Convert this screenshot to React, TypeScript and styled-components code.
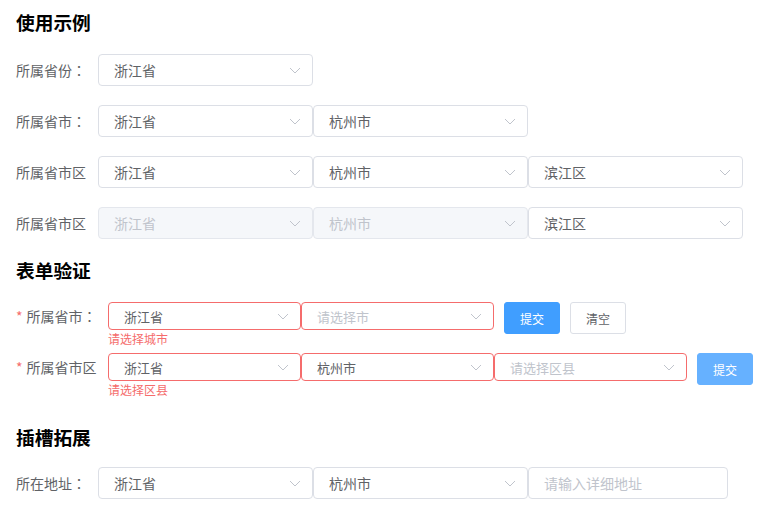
import styled, { createGlobalStyle, css } from "styled-components";

const GlobalStyle = createGlobalStyle`
  body {
    margin: 0;
    background: #ffffff;
    font-family: "Noto Sans CJK SC", "Noto Sans", sans-serif;
    color: #606266;
  }
`;

const Page = styled.div`
  padding: 10px 16px 0;
`;

const Title = styled.h3<{ $top?: number; $bottom?: number }>`
  margin: ${(p) => p.$top || 0}px 0 ${(p) => p.$bottom ?? 20}px;
  font-size: 18.72px;
  line-height: 24px;
  font-weight: 700;
  color: #000000;
`;

const Row = styled.div<{ $small?: boolean }>`
  display: flex;
  align-items: ${(p) => (p.$small ? "flex-start" : "center")};
  height: 32px;
  margin-bottom: 19px;
`;

const Label = styled.label<{ $width: number; $small?: boolean }>`
  flex: none;
  width: ${(p) => p.$width}px;
  font-size: 14px;
  line-height: ${(p) => (p.$small ? "28px" : "32px")};
  white-space: nowrap;
  color: #606266;
`;

const Colon = styled.span`
  font-family: "Noto Sans CJK TC", "Noto Sans CJK SC", sans-serif;
`;

const Star = styled.span`
  color: #f56c6c;
  margin-right: 4px;
`;

const Group = styled.div`
  position: relative;
  display: flex;
`;

const ErrorTip = styled.div`
  position: absolute;
  left: 0;
  top: 100%;
  padding-top: 3px;
  font-size: 12px;
  line-height: 12px;
  color: #f56c6c;
  white-space: nowrap;
`;

const Box = styled.div<{
  $width: number;
  $small?: boolean;
  $error?: boolean;
  $disabled?: boolean;
}>`
  position: relative;
  box-sizing: border-box;
  width: ${(p) => p.$width}px;
  height: ${(p) => (p.$small ? 28 : 32)}px;
  padding: 0 30px 0 15px;
  display: flex;
  align-items: center;
  border: 1px solid #dcdfe6;
  border-radius: 4px;
  background: #ffffff;
  font-size: ${(p) => (p.$small ? 13 : 14)}px;
  color: #606266;
  ${(p) =>
    p.$error &&
    css`
      border-color: #f56c6c;
    `}
  ${(p) =>
    p.$disabled &&
    css`
      background: #f5f7fa;
      border-color: #e4e7ed;
      color: #c0c4cc;
    `}
`;

const Placeholder = styled.span`
  color: #c0c4cc;
`;

const Arrow = styled.svg`
  position: absolute;
  right: 11px;
  top: 50%;
  margin-top: -3px;
  width: 12px;
  height: 7px;
`;

const Button = styled.button<{ $kind?: "primary" | "plain"; $faded?: boolean }>`
  box-sizing: border-box;
  height: 32px;
  padding: 0 15px;
  margin-left: 10px;
  border-radius: 3px;
  font-family: inherit;
  font-size: 12px;
  border: 1px solid ${(p) => (p.$kind === "primary" ? "#409eff" : "#dcdfe6")};
  background: ${(p) => (p.$kind === "primary" ? "#409eff" : "#ffffff")};
  color: ${(p) => (p.$kind === "primary" ? "#ffffff" : "#606266")};
  ${(p) =>
    p.$faded &&
    css`
      background: #66b1ff;
      border-color: #66b1ff;
    `}
`;

const Chevron = () => (
  <Arrow viewBox="0 0 12 7">
    <path d="M1 1 L6 6 L11 1" fill="none" stroke="#c0c4cc" strokeWidth="1" />
  </Arrow>
);

type SelectProps = {
  value?: string;
  placeholder?: string;
  width?: number;
  small?: boolean;
  error?: boolean;
  disabled?: boolean;
  arrow?: boolean;
};

const Select = ({
  value,
  placeholder,
  width = 215,
  small,
  error,
  disabled,
  arrow = true,
}: SelectProps) => (
  <Box $width={width} $small={small} $error={error} $disabled={disabled}>
    {value ? value : <Placeholder>{placeholder}</Placeholder>}
    {arrow && <Chevron />}
  </Box>
);

export default function App() {
  return (
    <Page>
      <GlobalStyle />
      <Title>使用示例</Title>
      <Row>
        <Label $width={82}>
          所属省份<Colon>：</Colon>
        </Label>
        <Select value="浙江省" />
      </Row>
      <Row>
        <Label $width={82}>
          所属省市<Colon>：</Colon>
        </Label>
        <Select value="浙江省" />
        <Select value="杭州市" />
      </Row>
      <Row>
        <Label $width={82}>所属省市区</Label>
        <Select value="浙江省" />
        <Select value="杭州市" />
        <Select value="滨江区" />
      </Row>
      <Row>
        <Label $width={82}>所属省市区</Label>
        <Select value="浙江省" disabled />
        <Select value="杭州市" disabled />
        <Select value="滨江区" />
      </Row>

      <Title $top={19}>表单验证</Title>
      <Row $small>
        <Label $width={92} $small>
          <Star>*</Star>所属省市<Colon>：</Colon>
        </Label>
        <Group>
          <Select value="浙江省" width={193} small error />
          <Select placeholder="请选择市" width={193} small error />
          <ErrorTip>请选择城市</ErrorTip>
        </Group>
        <Button $kind="primary">提交</Button>
        <Button $kind="plain">清空</Button>
      </Row>
      <Row $small>
        <Label $width={92} $small>
          <Star>*</Star>所属省市区
        </Label>
        <Group>
          <Select value="浙江省" width={193} small error />
          <Select value="杭州市" width={193} small error />
          <Select placeholder="请选择区县" width={193} small error />
          <ErrorTip>请选择区县</ErrorTip>
        </Group>
        <Button $kind="primary" $faded>
          提交
        </Button>
      </Row>

      <Title $top={40} $bottom={18}>
        插槽拓展
      </Title>
      <Row>
        <Label $width={82}>
          所在地址<Colon>：</Colon>
        </Label>
        <Select value="浙江省" />
        <Select value="杭州市" />
        <Select placeholder="请输入详细地址" width={200} arrow={false} />
      </Row>
    </Page>
  );
}
